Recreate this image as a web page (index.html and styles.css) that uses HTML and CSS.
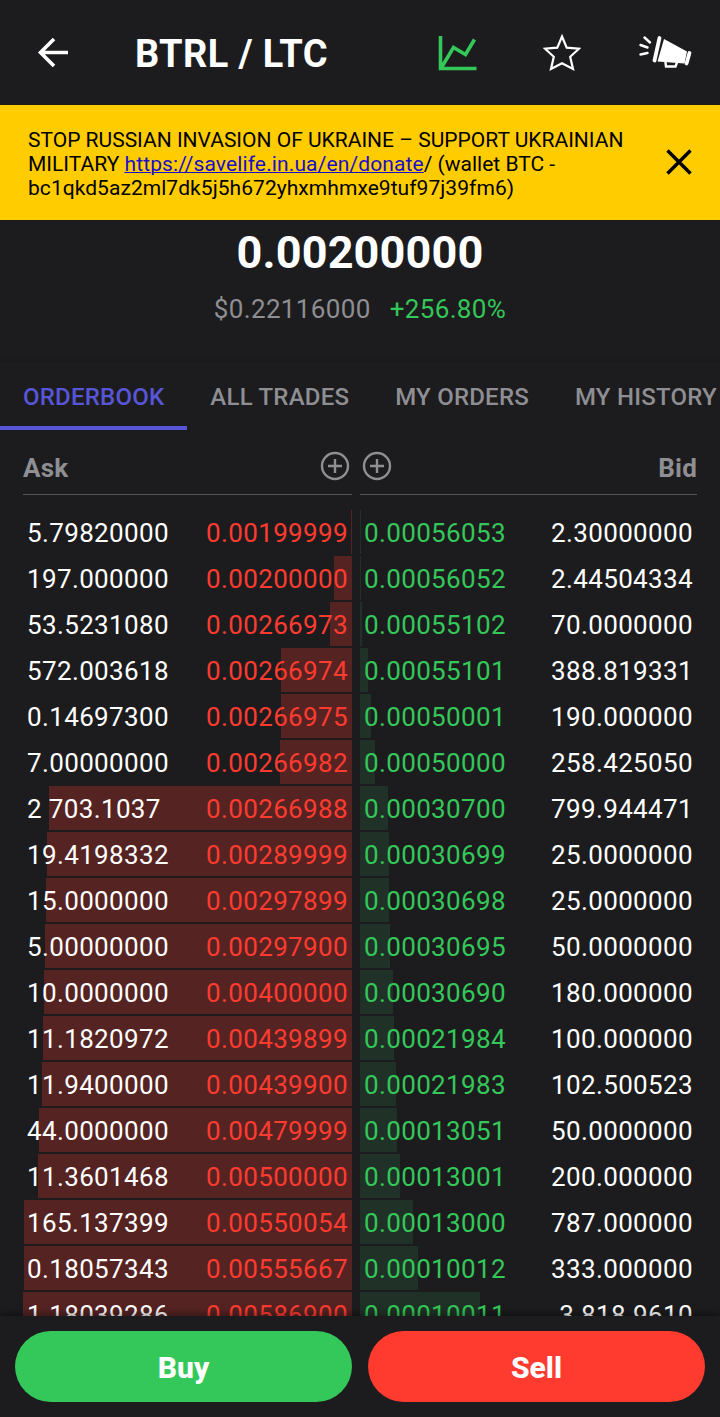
FILE: index.html
```html
<!DOCTYPE html>
<html lang="en">
<head>
    <meta charset="UTF-8">
    <meta name="viewport" content="width=device-width, initial-scale=1.0">
    <title>BTRL / LTC</title>
    <link rel="stylesheet" href="styles.css">
</head>
<body>
<header class="topbar">
    <svg class="back" width="32" height="32" viewBox="0 0 32 32"><path d="M31 15.5H4M17 2L3.5 15.5L17 29"/></svg>
    <h1>BTRL / LTC</h1>
    <svg class="chart" width="40" height="38" viewBox="0 0 40 38"><path d="M2.5 1V33.5H38.5M3.5 32.5L15.5 12.5L27.5 19.5L36.5 4.5"/></svg>
    <svg class="star" width="38" height="38" viewBox="0 0 38 38"><path d="M19 2.5L23.7 13.6L36 14.7L27.2 22.8L30 35L19 29.2L8 35L10.8 22.8L2 14.7L14.3 13.6Z"/></svg>
    <svg class="horn" width="54" height="36" viewBox="0 0 54 36">
        <path class="fill" d="M26 4L49 16.5L46.5 28.5L19.5 26.5Z"/>
        <path class="edge" d="M21.5 3L16.5 25.5M51.5 18L48.5 28.5"/>
        <path class="rays" d="M6.5 2.5L12 7.5M2.5 10L9.5 12.5M2.5 19.5L9.5 18M27.5 27.5L28 31.5H37.5L39 27.5"/>
    </svg>
</header>

<div class="banner">
    <p>STOP RUSSIAN INVASION OF UKRAINE – SUPPORT UKRAINIAN MILITARY <a href="https://savelife.in.ua/en/donate">https://savelife.in.ua/en/donate</a>/ (wallet BTC - <span class="wallet">bc1qkd5az2ml7dk5j5h672yhxmhmxe9tuf97j39fm6)</span></p>
    <svg width="28" height="28" viewBox="0 0 28 28"><path d="M2.5 2.5L25.5 25.5M25.5 2.5L2.5 25.5"/></svg>
</div>

<section class="price">
    <div class="last">0.00200000</div>
    <div class="change"><span>$0.22116000</span><span class="up">+256.80%</span></div>
</section>

<nav class="tabs">
    <div class="tab active">ORDERBOOK</div>
    <div class="tab">ALL TRADES</div>
    <div class="tab">MY ORDERS</div>
    <div class="tab">MY HISTORY</div>
</nav>

<main class="book">
    <div class="side asks">
        <div class="head">
            <span>Ask</span>
            <svg width="30" height="30" viewBox="0 0 30 30"><circle cx="15" cy="15" r="13"/><path d="M15 8V22M8 15H22"/></svg>
        </div>
        <div id="asks"></div>
    </div>
    <div class="side bids">
        <div class="head">
            <svg width="30" height="30" viewBox="0 0 30 30"><circle cx="15" cy="15" r="13"/><path d="M15 8V22M8 15H22"/></svg>
            <span>Bid</span>
        </div>
        <div id="bids"></div>
    </div>
</main>

<footer class="actions">
    <button class="buy">Buy</button>
    <button class="sell">Sell</button>
</footer>

<script>
    // amount, price, depth bar width
    const asks = [
        ["5.79820000", "0.00199999", 1],
        ["197.000000", "0.00200000", 18],
        ["53.5231080", "0.00266973", 22],
        ["572.003618", "0.00266974", 71],
        ["0.14697300", "0.00266975", 71],
        ["7.00000000", "0.00266982", 72],
        ["2 703.1037", "0.00266988", 303],
        ["19.4198332", "0.00289999", 305],
        ["15.0000000", "0.00297899", 306],
        ["5.00000000", "0.00297900", 307],
        ["10.0000000", "0.00400000", 308],
        ["11.1820972", "0.00439899", 309],
        ["11.9400000", "0.00439900", 310],
        ["44.0000000", "0.00479999", 313],
        ["11.3601468", "0.00500000", 314],
        ["165.137399", "0.00550054", 328],
        ["0.18057343", "0.00555667", 328],
        ["1.18039286", "0.00586900", 329]
    ];
    const bids = [
        ["2.30000000", "0.00056053", 1],
        ["2.44504334", "0.00056052", 1],
        ["70.0000000", "0.00055102", 2],
        ["388.819331", "0.00055101", 8],
        ["190.000000", "0.00050001", 11],
        ["258.425050", "0.00050000", 15],
        ["799.944471", "0.00030700", 28],
        ["25.0000000", "0.00030699", 29],
        ["25.0000000", "0.00030698", 29],
        ["50.0000000", "0.00030695", 30],
        ["180.000000", "0.00030690", 33],
        ["100.000000", "0.00021984", 34],
        ["102.500523", "0.00021983", 36],
        ["50.0000000", "0.00013051", 37],
        ["200.000000", "0.00013001", 40],
        ["787.000000", "0.00013000", 53],
        ["333.000000", "0.00010012", 58],
        ["3 818.9610", "0.00010011", 120]
    ];
    function fill(id, rows) {
        document.getElementById(id).innerHTML = rows.map(([amount, price, depth]) =>
            `<div class="row"><i class="bar" style="width:${depth}px"></i><span class="amount">${amount}</span><span class="cost">${price}</span></div>`
        ).join("");
    }
    fill("asks", asks);
    fill("bids", bids);
</script>
</body>
</html>
```

FILE: styles.css
```css
* {
    box-sizing: border-box;
}
html, body {
    height: 100%;
    margin: 0;
    overflow: hidden;
}
body {
    display: flex;
    flex-direction: column;
    background: #1c1c1e;
    color: white;
    font-family: Roboto, sans-serif;
}
svg {
    display: block;
    flex: none;
    fill: none;
    stroke: white;
}

.topbar {
    display: flex;
    align-items: center;
    flex: none;
    height: 105px;
    padding: 0 28px 0 37px;
}
.topbar h1 {
    width: 301px;
    margin: 2px 0 0 66px;
    font-size: 38px;
    font-weight: 700;
    letter-spacing: 0.35px;
    white-space: nowrap;
}
.back {
    stroke-width: 3.6;
}
.chart {
    stroke: #34c759;
    stroke-width: 3.6;
    margin: 2px 0 0 2px;
}
.star {
    stroke-width: 2.2;
    margin-left: 65px;
}
.horn {
    margin-left: 57px;
    stroke-linecap: round;
}
.horn .fill {
    fill: white;
    stroke: none;
}
.horn .edge {
    stroke-width: 3.8;
}
.horn .rays {
    stroke-width: 2.4;
}

.banner {
    display: flex;
    align-items: center;
    justify-content: space-between;
    flex: none;
    height: 115px;
    padding: 0 27px 0 28px;
    background: #ffcc00;
    color: black;
}
.banner p {
    width: 615px;
    margin: 3px 0 0;
    font-size: 21px;
    line-height: 24px;
}
.banner a {
    color: #1a0dcc;
    letter-spacing: 0.12px;
    text-decoration-thickness: 1px;
}
.wallet {
    letter-spacing: 0.05px;
}
.banner svg {
    margin-bottom: 2px;
    stroke: black;
    stroke-width: 3.4;
}

.price {
    flex: none;
    height: 142px;
    padding-top: 5px;
    text-align: center;
    background: linear-gradient(#1c1c1e 134px, #19191b);
}
.last {
    font-size: 45px;
    font-weight: 700;
    line-height: 56px;
    letter-spacing: 0.15px;
}
.change {
    display: flex;
    justify-content: center;
    gap: 19px;
    margin-top: 12px;
    font-size: 26px;
    line-height: 32px;
    letter-spacing: 0.35px;
    color: #8e8e93;
}
.change .up {
    color: #34c759;
}

.tabs {
    display: flex;
    flex: none;
    height: 68px;
    overflow: hidden;
}
.tab {
    flex: none;
    padding: 19px 23px 0;
    font-size: 24px;
    font-weight: 500;
    line-height: 32px;
    letter-spacing: 0.22px;
    white-space: nowrap;
    color: #8e8e93;
}
.tab.active {
    color: #5856d6;
    border-bottom: 4px solid #5856d6;
}

.book {
    display: flex;
    flex: 1;
    gap: 8px;
    min-height: 0;
    padding: 0 23px;
    overflow: hidden;
}
.asks {
    width: 329px;
}
.bids {
    width: 337px;
}
.head {
    display: flex;
    justify-content: space-between;
    align-items: center;
    height: 65px;
    margin-bottom: 15px;
    padding-top: 8px;
    border-bottom: 1px solid #545456;
    font-size: 26px;
    font-weight: 700;
    line-height: 30px;
    letter-spacing: 0.2px;
    color: #8e8e93;
}
.head span {
    margin-top: 4px;
}
.head svg {
    stroke: #8e8e93;
    stroke-width: 2.4;
}
.asks .head svg {
    margin-right: 2px;
}
.bids .head svg {
    margin-left: 2px;
}
.row {
    position: relative;
    display: flex;
    justify-content: space-between;
    height: 44px;
    margin-bottom: 2px;
    padding: 0 4px;
    font-size: 26px;
    line-height: 46px;
    letter-spacing: 0.36px;
    white-space: nowrap;
}
.row span {
    position: relative;
}
.bids .row {
    flex-direction: row-reverse;
}
.bar {
    position: absolute;
    top: 0;
    height: 44px;
}
.asks .bar {
    right: 0;
    background: #552322;
}
.bids .bar {
    left: 0;
    background: #203127;
}
.asks .cost {
    color: #ff3b30;
}
.bids .cost {
    color: #34c759;
}

.actions {
    position: relative;
    display: flex;
    flex: none;
    gap: 16px;
    height: 101px;
    padding: 15px;
    background: #1c1c1e;
    box-shadow: 0 -2px 8px rgba(0, 0, 0, 0.4);
}
.actions button {
    flex: 1;
    height: 71px;
    padding: 2px 0 0;
    border: none;
    border-radius: 36px;
    color: white;
    font-family: inherit;
    font-size: 30px;
    font-weight: 800;
}
.buy {
    background: #34c759;
}
.sell {
    background: #ff3b30;
}
```
